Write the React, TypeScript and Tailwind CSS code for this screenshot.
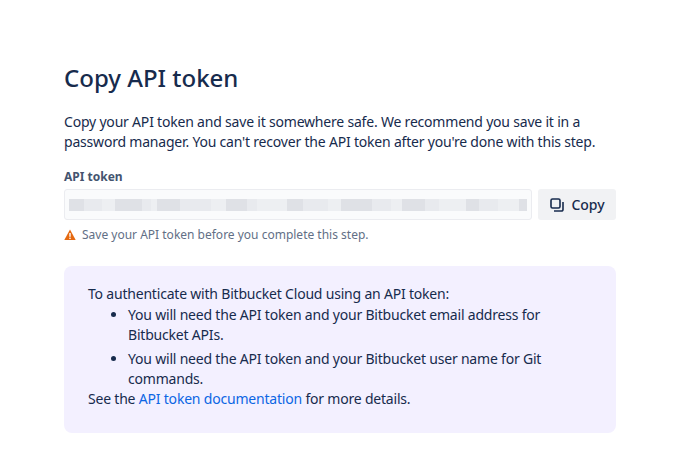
export default function App() {
  const blocks = [14,18,12,26,8,6,22,30,14,20,10,28,16,24,12,30,18,10,22,14,26,12,18,20,8];
  return (
    <div className="w-[680px] h-[467px] bg-white text-[#172b4d]" style={{ fontFamily: '"Noto Sans", sans-serif' }}>
      <div className="pl-[64px] pt-[62px] w-[616px]">
        <h1 className="text-[24px] leading-[32px] font-medium text-[#172b4d]">Copy API token</h1>
        <p className="mt-[18px] text-[14px] leading-[20px] tracking-[-0.2px] text-[#172b4d]">
          Copy your API token and save it somewhere safe. We recommend you save it in a password manager. You can't recover the API token after you're done with this step.
        </p>
        <div className="mt-[17px] text-[12px] leading-[16px] font-bold text-[#44546f]">API token</div>
        <div className="mt-[4px] flex gap-[6px]">
          <div className="flex-1 h-[31px] border border-[#ebecf0] rounded-[3px] bg-[#fafbfc] flex items-center px-[4px] overflow-hidden">
            <div className="flex h-[12px] w-full">
              {blocks.map((w, i) => (
                <div key={i} className={i % 3 === 0 ? "bg-[#dfe1e6]" : i % 3 === 1 ? "bg-[#e8eaee]" : "bg-[#edeff2]"} style={{ width: w * 2 }} />
              ))}
            </div>
          </div>
          <button className="w-[78px] h-[31px] rounded-[3px] bg-[#f1f2f4] flex items-center justify-center gap-[6px] text-[14px] font-medium text-[#172b4d]">
            <svg width="16" height="16" viewBox="0 0 16 16" fill="none" stroke="#172b4d" strokeWidth="1.6">
              <rect x="2" y="2" width="9" height="9" rx="1.5" />
              <path d="M14 5v7.5a1.5 1.5 0 0 1-1.5 1.5H5" />
            </svg>
            Copy
          </button>
        </div>
        <div className="mt-[6px] flex items-center gap-[6px] text-[12px] text-[#626f86]">
          <svg width="12" height="12" viewBox="0 0 12 12"><path d="M6 0.5L11.7 11H0.3Z" fill="#e56910" /><rect x="5.3" y="4" width="1.4" height="3.8" fill="#fff"/><rect x="5.3" y="8.6" width="1.4" height="1.4" fill="#fff"/></svg>
          Save your API token before you complete this step.
        </div>
        <div className="mt-[22px] rounded-[8px] bg-[#f3f0ff] px-[24px] pt-[18px] pb-[24px] text-[14px] leading-[20px] text-[#172b4d] tracking-[-0.2px]">
          <div>To authenticate with Bitbucket Cloud using an API token:</div>
          <ul className="list-disc pl-[40px]">
            <li className="mt-[1px]">You will need the API token and your Bitbucket email address for Bitbucket APIs.</li>
            <li className="mt-[4px]">You will need the API token and your Bitbucket user name for Git commands.</li>
          </ul>
          <div>See the <span className="text-[#0c66e4]">API token documentation</span> for more details.</div>
        </div>
      </div>
    </div>
  );
}
